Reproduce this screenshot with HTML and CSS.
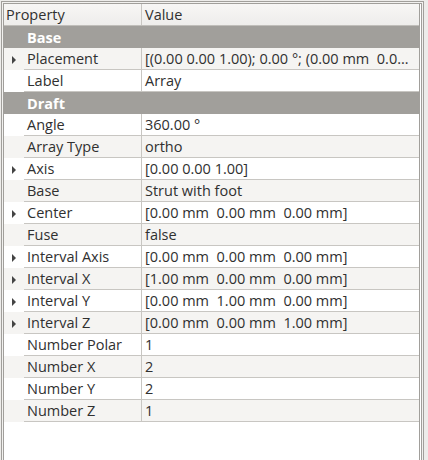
FILE: index.html
```html
<!DOCTYPE html>
<html>
<head>
<meta charset="utf-8">
<link rel="stylesheet" href="styles.css">
</head>
<body>
<div class="dock">
  <div class="frame">
    <div class="view">
      <div class="header">
        <div class="h-prop">Property</div>
        <div class="h-val">Value</div>
      </div>
      <div class="row group">Base</div>
      <div class="row alt"><div class="ind"><span class="arrow"></span></div><div class="prop">Placement</div><div class="val">[(0.00 0.00 1.00); 0.00 °; (0.00 mm  0.0…</div></div>
      <div class="row"><div class="ind"></div><div class="prop">Label</div><div class="val">Array</div></div>
      <div class="row group">Draft</div>
      <div class="row"><div class="ind"></div><div class="prop">Angle</div><div class="val">360.00 °</div></div>
      <div class="row alt"><div class="ind"></div><div class="prop">Array Type</div><div class="val">ortho</div></div>
      <div class="row"><div class="ind"><span class="arrow"></span></div><div class="prop">Axis</div><div class="val">[0.00 0.00 1.00]</div></div>
      <div class="row alt"><div class="ind"></div><div class="prop">Base</div><div class="val">Strut with foot</div></div>
      <div class="row"><div class="ind"><span class="arrow"></span></div><div class="prop">Center</div><div class="val">[0.00 mm  0.00 mm  0.00 mm]</div></div>
      <div class="row alt"><div class="ind"></div><div class="prop">Fuse</div><div class="val">false</div></div>
      <div class="row"><div class="ind"><span class="arrow"></span></div><div class="prop">Interval Axis</div><div class="val">[0.00 mm  0.00 mm  0.00 mm]</div></div>
      <div class="row alt"><div class="ind"><span class="arrow"></span></div><div class="prop">Interval X</div><div class="val">[1.00 mm  0.00 mm  0.00 mm]</div></div>
      <div class="row"><div class="ind"><span class="arrow"></span></div><div class="prop">Interval Y</div><div class="val">[0.00 mm  1.00 mm  0.00 mm]</div></div>
      <div class="row alt"><div class="ind"><span class="arrow"></span></div><div class="prop">Interval Z</div><div class="val">[0.00 mm  0.00 mm  1.00 mm]</div></div>
      <div class="row"><div class="ind"></div><div class="prop">Number Polar</div><div class="val">1</div></div>
      <div class="row alt"><div class="ind"></div><div class="prop">Number X</div><div class="val">2</div></div>
      <div class="row"><div class="ind"></div><div class="prop">Number Y</div><div class="val">2</div></div>
      <div class="row alt"><div class="ind"></div><div class="prop">Number Z</div><div class="val">1</div></div>
    </div>
  </div>
</div>
</body>
</html>
```
FILE: styles.css
```css
html, body {
  margin: 0;
  padding: 0;
  background: #edecea;
  width: 428px;
  height: 460px;
  overflow: hidden;
}
body {
  font-family: "Open Sans", "DejaVu Sans", sans-serif;
  font-size: 14.5px;
  color: #303030;
}
.dock {
  box-sizing: border-box;
  margin: 1px 0 0 1px;
  width: 423px;
  height: 480px;
  border: 1px solid #a19f9b;
  border-bottom: none;
  padding: 1px;
  background: #f2f1ef;
}
.frame {
  box-sizing: border-box;
  height: 100%;
  border: 1px solid #a19f9b;
  border-bottom: none;
  padding-right: 1px;
  background: #ffffff;
}
.view {
  box-sizing: border-box;
  width: 416px;
  height: 100%;
  border-right: 1px solid #a19f9b;
  background: #ffffff;
}
.header {
  display: flex;
  height: 22px;
  box-sizing: border-box;
  border-bottom: 1px solid #c0beba;
  background: linear-gradient(#f7f6f5, #eeedeb);
}
.h-prop {
  box-sizing: border-box;
  width: 138px;
  padding-left: 2px;
  border-right: 1px solid #c8c6c2;
  line-height: 22px;
  white-space: nowrap;
}
.h-val {
  flex: 1;
  padding-left: 3px;
  line-height: 22px;
}
.row {
  display: flex;
  height: 22px;
  box-sizing: border-box;
  white-space: pre;
}
.row.alt {
  background: #f5f4f2;
}
.row.group {
  background: #a19f9b;
  color: #ffffff;
  font-weight: bold;
  padding-left: 23px;
  line-height: 23px;
}
.ind {
  width: 20px;
  flex: none;
  display: flex;
  align-items: center;
  padding-left: 8px;
  padding-top: 1px;
  box-sizing: border-box;
}
.arrow {
  width: 0;
  height: 0;
  border-top: 4px solid transparent;
  border-bottom: 4px solid transparent;
  border-left: 4px solid #444444;
}
.prop {
  box-sizing: border-box;
  width: 118px;
  flex: none;
  padding-left: 3px;
  padding-top: 1px;
  border-right: 1px solid #c8c6c2;
  border-bottom: 1px solid #c8c6c2;
  line-height: 20px;
  overflow: hidden;
}
.val {
  flex: 1;
  padding-left: 3px;
  padding-top: 1px;
  border-bottom: 1px solid #c8c6c2;
  line-height: 20px;
  overflow: hidden;
}
```
